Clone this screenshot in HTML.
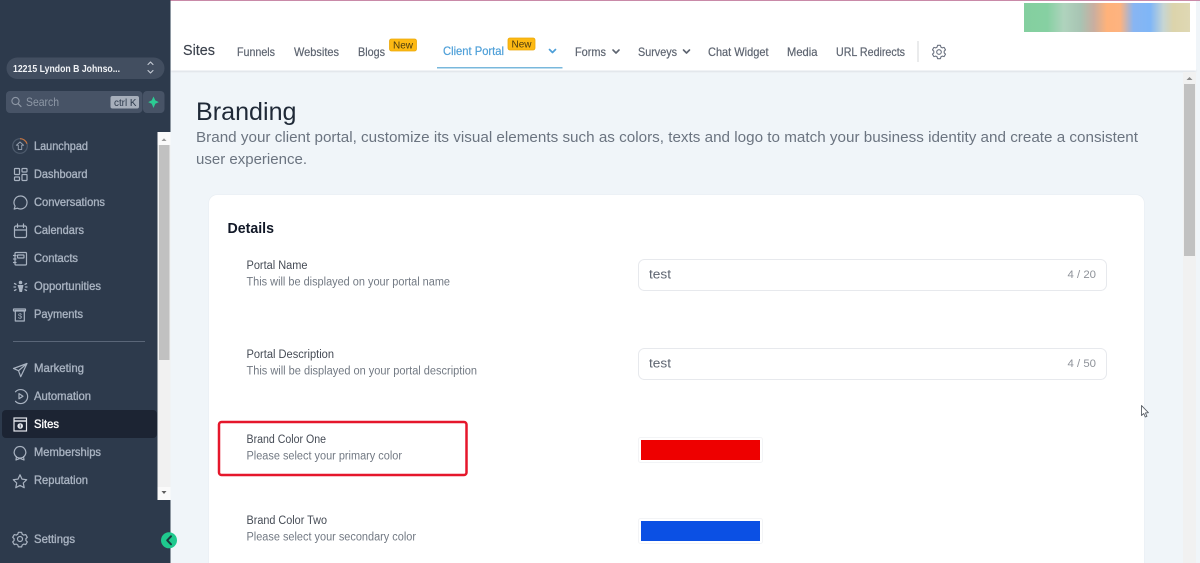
<!DOCTYPE html>
<html>
<head>
<meta charset="utf-8">
<style>
html,body{margin:0;padding:0;width:1200px;height:563px;overflow:hidden;background:#f0f5f9}
svg{position:absolute;left:0;top:0;display:block;filter:blur(.35px)}
text{font-family:"Liberation Sans",sans-serif}
.n{font-size:12px;fill:#a9b3c1;stroke:#a9b3c1;stroke-width:.35px}
.i{fill:none;stroke:#a9b3c1;stroke-width:1.2;stroke-linecap:round;stroke-linejoin:round}
.h{font-size:12px;fill:#5d6470;stroke:#5d6470;stroke-width:.2px}
.l{font-size:11.5px;fill:#454b55}
.d{font-size:11.5px;fill:#727983}
.c{fill:none;stroke:#5d6470;stroke-width:1.6;stroke-linecap:round;stroke-linejoin:round}
</style>
</head>
<body>
<svg width="1200" height="563" viewBox="0 0 1200 563" xmlns="http://www.w3.org/2000/svg">
<defs>
<linearGradient id="b" x1="0" x2="1" y1="0" y2="0">
<stop offset="0" stop-color="#84cf9f"/><stop offset=".14" stop-color="#86d0a2"/><stop offset=".24" stop-color="#afd3bd"/><stop offset=".34" stop-color="#a8c4b3"/><stop offset=".42" stop-color="#c9aea0"/><stop offset=".5" stop-color="#ffb27a"/><stop offset=".58" stop-color="#fdb380"/><stop offset=".66" stop-color="#88b5f2"/><stop offset=".76" stop-color="#7fb6f7"/><stop offset=".84" stop-color="#c6d5d3"/><stop offset=".9" stop-color="#dcd4ab"/><stop offset="1" stop-color="#dfd8b4"/>
</linearGradient>
<filter id="s" x="-5%" y="-5%" width="110%" height="120%"><feGaussianBlur stdDeviation="1"/></filter>
</defs>

<!-- main background -->
<rect x="170" y="0" width="1030" height="563" fill="#f0f5f9"/>

<!-- header -->
<rect x="171" y="70" width="1025" height="2" fill="#d9dde2" filter="url(#s)"/>
<rect x="171" y="0" width="1025" height="70.500" fill="#fff"/>
<rect x="170" y="0" width="1030" height="1" fill="#c98aa8"/>
<rect x="1024" y="3" width="166" height="29" fill="url(#b)"/>

<text x="183" y="55" font-size="14.500" fill="#3c424d" stroke="#3c424d" stroke-width=".15" textLength="32" lengthAdjust="spacingAndGlyphs">Sites</text>
<text class="h" x="237" y="56" textLength="38" lengthAdjust="spacingAndGlyphs">Funnels</text>
<text class="h" x="294" y="56" textLength="45" lengthAdjust="spacingAndGlyphs">Websites</text>
<text class="h" x="358" y="56" textLength="27" lengthAdjust="spacingAndGlyphs">Blogs</text>
<rect x="389.500" y="39" width="27" height="12" rx="2" fill="#fdb913" stroke="#eba90a" stroke-width=".8"/>
<text x="393" y="48.500" font-size="10.500" fill="#4a3a10" textLength="20" lengthAdjust="spacingAndGlyphs">New</text>
<text x="443" y="55" font-size="12" fill="#4d9fd8" stroke="#4d9fd8" stroke-width=".2" textLength="61" lengthAdjust="spacingAndGlyphs">Client Portal</text>
<rect x="508" y="38" width="27" height="12" rx="2" fill="#fdb913" stroke="#eba90a" stroke-width=".8"/>
<text x="511.500" y="47.500" font-size="10.500" fill="#4a3a10" textLength="20" lengthAdjust="spacingAndGlyphs">New</text>
<path d="M549.500 49.500l3 3 3-3" fill="none" stroke="#4d9fd8" stroke-width="1.700" stroke-linecap="round" stroke-linejoin="round"/>
<rect x="437" y="67" width="125.500" height="1.500" fill="#79b8dc"/>
<text class="h" x="575" y="56" textLength="31" lengthAdjust="spacingAndGlyphs">Forms</text>
<path class="c" d="M613 50l3 3 3-3"/>
<text class="h" x="638" y="56" textLength="39" lengthAdjust="spacingAndGlyphs">Surveys</text>
<path class="c" d="M683.500 50l3 3 3-3"/>
<text class="h" x="708" y="56" textLength="60.500" lengthAdjust="spacingAndGlyphs">Chat Widget</text>
<text class="h" x="787" y="56" textLength="30.500" lengthAdjust="spacingAndGlyphs">Media</text>
<text class="h" x="836" y="56" textLength="69" lengthAdjust="spacingAndGlyphs">URL Redirects</text>
<rect x="917.500" y="41" width="1" height="21" fill="#d5d7da"/>
<g fill="none" stroke="#6b7280" stroke-width="1.100" stroke-linejoin="round">
<circle cx="939" cy="52" r="2.300"/>
<path d="M937.600 45.300h2.800l.5 1.800 1.400.8 1.800-.5 1.400 2.400-1.300 1.300v1.800l1.300 1.300-1.400 2.400-1.800-.5-1.400.8-.5 1.800h-2.800l-.5-1.800-1.400-.8-1.800.5-1.400-2.400 1.300-1.300v-1.800l-1.300-1.300 1.400-2.400 1.800.5 1.400-.8z"/>
</g>

<!-- right scrollbar -->
<rect x="1183" y="72" width="13" height="491" fill="#f1f1f1"/>
<rect x="1184" y="84" width="11" height="172" fill="#c1c1c1"/>
<path d="M1186.500 80l3-3 3 3z" fill="#8a8a8a"/>

<!-- heading -->
<text x="196" y="120" font-size="25" fill="#1f2937" textLength="100.500" lengthAdjust="spacingAndGlyphs">Branding</text>
<text x="196" y="142" font-size="15" fill="#6b7480" textLength="942" lengthAdjust="spacingAndGlyphs">Brand your client portal, customize its visual elements such as colors, texts and logo to match your business identity and create a consistent</text>
<text x="196" y="164" font-size="15" fill="#6b7480" textLength="111" lengthAdjust="spacingAndGlyphs">user experience.</text>

<!-- card -->
<rect x="208.500" y="194.500" width="936" height="380" rx="8" fill="#e8edf2"/>
<rect x="209" y="195" width="935" height="380" rx="8" fill="#fff"/>
<text x="227.500" y="233" font-size="14.500" font-weight="700" fill="#111827" textLength="46.500" lengthAdjust="spacingAndGlyphs">Details</text>

<text class="l" x="246.500" y="269" textLength="61" lengthAdjust="spacingAndGlyphs">Portal Name</text>
<text class="d" x="246.500" y="285.500" textLength="203.500" lengthAdjust="spacingAndGlyphs">This will be displayed on your portal name</text>
<rect x="638.500" y="259.500" width="468" height="31" rx="6" fill="#fff" stroke="#e7e9ed"/>
<text x="649" y="278.500" font-size="12.500" fill="#5d6470" textLength="22" lengthAdjust="spacingAndGlyphs">test</text>
<text x="1067.500" y="278" font-size="11" fill="#8e9299" textLength="28.500" lengthAdjust="spacingAndGlyphs">4 / 20</text>

<text class="l" x="246.500" y="358" textLength="87.500" lengthAdjust="spacingAndGlyphs">Portal Description</text>
<text class="d" x="246.500" y="374.500" textLength="230.500" lengthAdjust="spacingAndGlyphs">This will be displayed on your portal description</text>
<rect x="638.500" y="348.500" width="468" height="31" rx="6" fill="#fff" stroke="#e7e9ed"/>
<text x="649" y="367.500" font-size="12.500" fill="#5d6470" textLength="22" lengthAdjust="spacingAndGlyphs">test</text>
<text x="1067.500" y="367" font-size="11" fill="#8e9299" textLength="28.500" lengthAdjust="spacingAndGlyphs">4 / 50</text>

<text class="l" x="246.500" y="443" textLength="79.500" lengthAdjust="spacingAndGlyphs">Brand Color One</text>
<text class="d" x="246.500" y="459.500" textLength="155.500" lengthAdjust="spacingAndGlyphs">Please select your primary color</text>
<rect x="219" y="422" width="247.500" height="53" rx="2.500" fill="none" stroke="#e5172b" stroke-width="2.500"/>
<rect x="638.500" y="437.500" width="124" height="25" rx="2" fill="#fff" stroke="#f3f4f6"/>
<rect x="641" y="440" width="119" height="20" fill="#ee0000"/>

<text class="l" x="246.500" y="524" textLength="80.500" lengthAdjust="spacingAndGlyphs">Brand Color Two</text>
<text class="d" x="246.500" y="540.500" textLength="169.500" lengthAdjust="spacingAndGlyphs">Please select your secondary color</text>
<rect x="638.500" y="518.500" width="124" height="25" rx="2" fill="#fff" stroke="#f3f4f6"/>
<rect x="641" y="521" width="119" height="20" fill="#0b50e4"/>

<!-- cursor -->
<path d="M1141.500 405.500v10l2.300-2 1.500 3.500 1.600-.7-1.500-3.400 3-.2z" fill="#fff" stroke="#5a6068" stroke-width=".9" stroke-linejoin="round"/>

<!-- sidebar -->
<rect x="0" y="0" width="170.500" height="563" fill="#2d3a4c"/>
<rect x="6.500" y="57.500" width="158" height="21.500" rx="10.700" fill="#424e60"/>
<text x="13" y="72" font-size="10.500" font-weight="700" fill="#f0f2f5" textLength="107" lengthAdjust="spacingAndGlyphs">12215 Lyndon B Johnso...</text>
<path d="M148 64.500l2.500-2.500 2.500 2.500M148 70.500l2.500 2.500 2.500-2.500" fill="none" stroke="#c6ccd5" stroke-width="1.100" stroke-linecap="round" stroke-linejoin="round"/>

<rect x="6" y="91" width="136.500" height="22" rx="4" fill="#475366"/>
<rect x="143" y="91" width="21.500" height="22" rx="4" fill="#475366"/>
<circle cx="15.500" cy="101" r="3.600" fill="none" stroke="#8e98a6" stroke-width="1.100"/>
<path d="M18.200 103.800l2.800 2.800" stroke="#8e98a6" stroke-width="1.200" stroke-linecap="round"/>
<text x="26" y="106" font-size="12" fill="#8e98a6" textLength="33" lengthAdjust="spacingAndGlyphs">Search</text>
<rect x="110.500" y="96" width="28.500" height="12.500" rx="2" fill="#a7afbb"/>
<text x="114" y="106" font-size="10.500" fill="#2d3a4c" textLength="22.500" lengthAdjust="spacingAndGlyphs">ctrl K</text>
<path d="M153.500 96.500l1.800 3.900 3.500 1.700-3.500 1.700-1.800 4.200-1.800-4.200-3.500-1.700 3.500-1.700z" fill="#2ccb93"/>

<!-- sidebar scrollbar -->
<rect x="157.500" y="132" width="13" height="368" fill="#f1f1f1"/>
<rect x="157.500" y="132" width="13" height="13" fill="#fafafa"/>
<rect x="157.500" y="487" width="13" height="13" fill="#fafafa"/>
<rect x="159" y="145" width="10.500" height="215" fill="#c1c1c1"/>
<path d="M161.500 141l2.500-2.700 2.500 2.700z" fill="#9a9a9a"/>
<path d="M161.500 491l2.500 3 2.500-3z" fill="#5f5f5f"/>

<!-- active row -->
<rect x="2" y="410" width="155" height="28" rx="4" fill="#1c2433"/>

<!-- nav items -->
<text class="n" x="34" y="150" textLength="54" lengthAdjust="spacingAndGlyphs">Launchpad</text>
<text class="n" x="34" y="178" textLength="53.500" lengthAdjust="spacingAndGlyphs">Dashboard</text>
<text class="n" x="34" y="206" textLength="71" lengthAdjust="spacingAndGlyphs">Conversations</text>
<text class="n" x="34" y="234" textLength="50" lengthAdjust="spacingAndGlyphs">Calendars</text>
<text class="n" x="34" y="262" textLength="44" lengthAdjust="spacingAndGlyphs">Contacts</text>
<text class="n" x="34" y="290" textLength="67" lengthAdjust="spacingAndGlyphs">Opportunities</text>
<text class="n" x="34" y="318" textLength="49" lengthAdjust="spacingAndGlyphs">Payments</text>
<rect x="13" y="341" width="132" height="1" fill="#5a6678"/>
<text class="n" x="34" y="372" textLength="50" lengthAdjust="spacingAndGlyphs">Marketing</text>
<text class="n" x="34" y="400" textLength="57" lengthAdjust="spacingAndGlyphs">Automation</text>
<text class="n" x="34" y="428" style="fill:#fff;stroke:#fff" textLength="25" lengthAdjust="spacingAndGlyphs">Sites</text>
<text class="n" x="34" y="456" textLength="67" lengthAdjust="spacingAndGlyphs">Memberships</text>
<text class="n" x="34" y="484" textLength="54" lengthAdjust="spacingAndGlyphs">Reputation</text>
<text class="n" x="34" y="543" textLength="41" lengthAdjust="spacingAndGlyphs">Settings</text>

<!-- icons -->
<circle cx="20" cy="146" r="7.300" fill="none" stroke="#4d5a6c" stroke-width="1.200"/>
<path d="M20 138.700a7.300 7.300 0 0 1 7 5" fill="none" stroke="#c9743d" stroke-width="1.200"/>
<path d="M20 142l3.600 3.300h-1.900v4.200h-3.400v-4.200h-1.900z" fill="none" stroke="#8f9aa9" stroke-width="1" stroke-linejoin="round"/>

<g class="i">
<rect x="14.500" y="168.500" width="5" height="6" rx=".6"/>
<rect x="22" y="168.500" width="5" height="3.500" rx=".6"/>
<rect x="14.500" y="177" width="5" height="3.500" rx=".6"/>
<rect x="22" y="174.500" width="5" height="6" rx=".6"/>

<path d="M20.500 196a6.500 6.500 0 1 1-3.100 12.200l-3.200.9.900-3a6.500 6.500 0 0 1 5.400-10.100z"/>

<rect x="14.500" y="226" width="12" height="11.500" rx="1.500"/>
<path d="M14.500 230h12M17.500 224v3.500M23.500 224v3.500"/>

<rect x="15" y="252.500" width="11.500" height="12.500" rx="1"/>
<rect x="17.500" y="255" width="6.500" height="3" rx=".5"/>
<path d="M13.500 255.500h2.500M13.500 259h2.500M13.500 262.500h2.500"/>

<rect x="13.500" y="309" width="12" height="2" rx=".4"/>
<rect x="15.300" y="310.500" width="9" height="10.500"/>
<text x="18" y="318.500" font-size="7.500" fill="#a9b3c1" stroke="none">$</text>

<path d="M27 363.500l-13.500 5 5 2.200 2.200 6zM18.500 370.700l8.500-7.200"/>

<path d="M15.500 391.800a7 7 0 1 1 0 9.500"/>
<path d="M19 393.600l4 2.600-4 2.600z"/>

<path d="M20 446.500a5.800 5.800 0 1 1-.01 0z"/>
<path d="M16.500 456.500l-.5 3.500 4-1.500 4 1.500-.5-3.500"/>

<path d="M20 474.800l2 4.300 4.700.6-3.400 3.300.9 4.700-4.200-2.300-4.200 2.300.9-4.700-3.400-3.300 4.700-.6z"/>

<circle cx="20" cy="539" r="2.500"/>
<path d="M18.400 532.300h3.200l.6 1.900 1.500.9 2-.5 1.600 2.700-1.400 1.400v1.800l1.400 1.400-1.600 2.700-2-.5-1.500.9-.6 1.900h-3.200l-.6-1.900-1.500-.9-2 .5-1.600-2.700 1.400-1.400v-1.800l-1.400-1.400 1.600-2.700 2 .5 1.500-.9z"/>
</g>

<!-- Opportunities icon -->
<circle cx="20.500" cy="282.500" r="1.800" fill="#a9b3c1"/>
<path d="M17.500 285h6l-1 4.500-.5 2.500h-2.500l-.5-2.500z" fill="#a9b3c1"/>
<g fill="none" stroke="#a9b3c1" stroke-width="1.300" stroke-linecap="round">
<path d="M14.500 283.500l1.500.8M14 287h1.500M14.500 290.500l1.500-.8M26.500 283.500l-1.500.8M27 287h-1.500M26.500 290.500l-1.500-.8"/>
</g>

<!-- Sites icon -->
<rect x="14" y="418" width="12.500" height="13" fill="none" stroke="#e4e7ec" stroke-width="1.200"/>
<path d="M14 421h12.500" stroke="#e4e7ec" stroke-width="1.500"/>
<circle cx="20.200" cy="426" r="2.800" fill="#e4e7ec"/>
<path d="M20.200 424.500v3" stroke="#1c2433" stroke-width=".8"/>

<!-- collapse button -->
<circle cx="169" cy="540.300" r="8" fill="#1fc98e"/>
<path d="M171 536.300l-3.800 4 3.800 4" fill="none" stroke="#1c3a3d" stroke-width="2" stroke-linecap="round" stroke-linejoin="round"/>
</svg>
</body>
</html>
